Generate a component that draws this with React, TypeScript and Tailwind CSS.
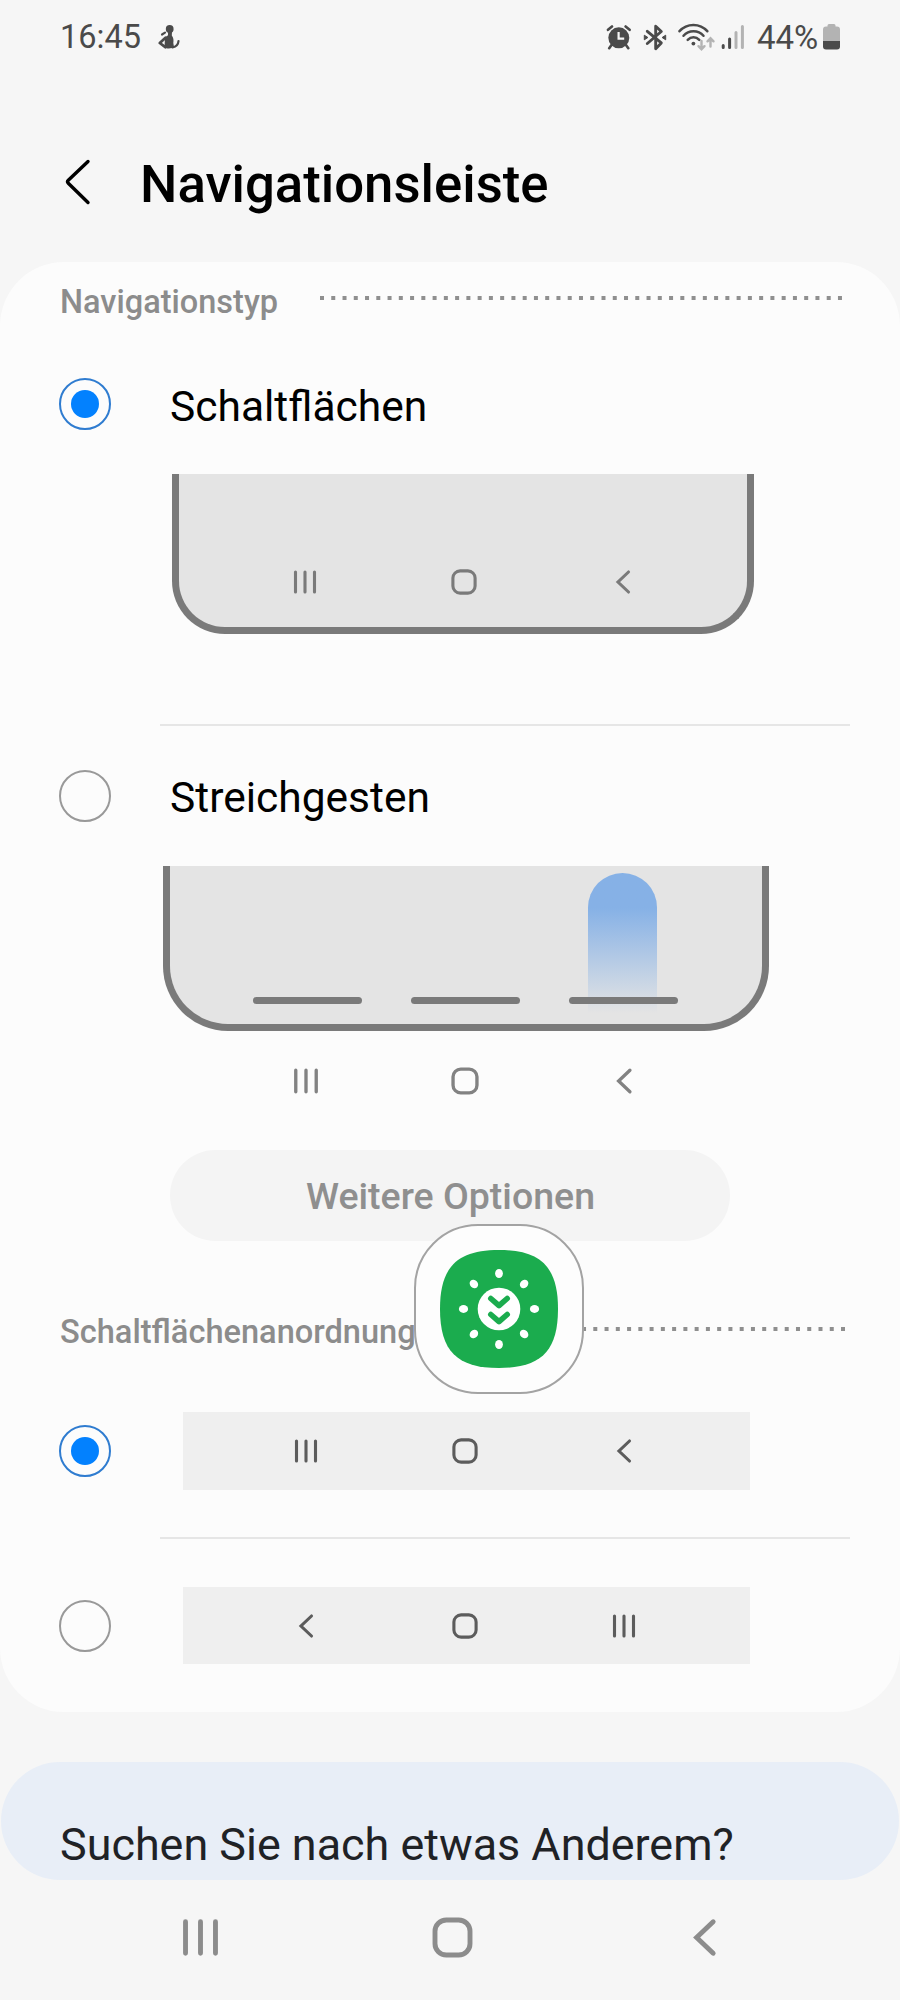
import React from "react";

type NavIconName = "recents" | "home" | "back";

// Button orders
const DEFAULT_ORDER: NavIconName[] = ["recents", "home", "back"];
const REVERSED_ORDER: NavIconName[] = ["back", "home", "recents"];

// Angles of the small dots around the floating button's centre
const RAYS = [0, 45, 90, 135, 180, 225, 270, 315];

function NavIcon({ name, size = 26 }: { name: NavIconName; size?: number }) {
  return (
    <svg
      width={size}
      height={size}
      viewBox="0 0 26 26"
      fill="none"
      stroke="currentColor"
      strokeWidth={3.1}
      strokeLinecap="round"
    >
      {name === "recents" && <path d="M3.5 3v20M13 3v20M22.5 3v20" />}
      {name === "home" && (
        <rect x="1.9" y="1.9" width="22.2" height="22.2" rx="7.2" />
      )}
      {name === "back" && <path d="M18.5 3L8 13l10.5 10" />}
    </svg>
  );
}

function NavIcons({
  order = DEFAULT_ORDER,
  size = 26,
}: {
  order?: NavIconName[];
  size?: number;
}) {
  return (
    <div className="flex">
      {order.map((name) => (
        <div key={name} className="w-[159px] flex justify-center">
          <NavIcon name={name} size={size} />
        </div>
      ))}
    </div>
  );
}

function Radio({ checked = false }: { checked?: boolean }) {
  return (
    <div
      className={
        checked
          ? "w-[52px] h-[52px] shrink-0 rounded-full border-2 border-[#2f7cd0] flex items-center justify-center"
          : "w-[52px] h-[52px] shrink-0 rounded-full border-2 border-[#999999]"
      }
    >
      {checked && <div className="w-7 h-7 rounded-full bg-[#0381fe]" />}
    </div>
  );
}

function DottedLine({ width }: { width: number }) {
  return (
    <svg width={width} height="4" className="shrink-0">
      <line
        x1="0"
        y1="2"
        x2={width}
        y2="2"
        stroke="#8f8f8f"
        strokeWidth="4"
        strokeDasharray="4 7.26"
      />
    </svg>
  );
}

function StatusBar() {
  return (
    <div className="h-[74px] pl-[60px] pr-[60px] flex items-center text-[#4a4a4a]">
      <span className="w-[83px] pt-px text-[32.5px] leading-none">16:45</span>
      <svg
        className="ml-[14px]"
        width="24"
        height="26"
        viewBox="0 0 24 26"
        fill="none"
        stroke="currentColor"
        strokeLinecap="round"
        strokeLinejoin="round"
      >
        <circle cx="12.700" cy="5" r="3.900" fill="currentColor" stroke="none" />
        <path
          d="M11 8h4l-.2 3.500c1.700 2 2 5 1.500 7.500l.7 4c-1.700 1.700-7 2-9.500.5L8 13.500l3-2.200z"
          fill="currentColor"
          stroke="none"
        />
        <path d="M5 10.500l3-1.900" strokeWidth="2.200" />
        <path d="M8.500 13.800L2.800 19l5.500 4.200" strokeWidth="2.800" />
        <path d="M15.500 23.300c3.500-.6 5.800-2.800 6-6.300" strokeWidth="2.200" />
      </svg>

      <div className="ml-auto flex items-center">
        {/* Alarm */}
        <svg width="26" height="26" viewBox="0 0 26 26" fill="none">
          <circle cx="12.8" cy="13.8" r="10.5" fill="currentColor" />
          <path
            d="M2 5.8L6 2.5M23.6 5.8L19.6 2.5M5.5 21l-2.3 3.2M20 21l2.3 3.2"
            stroke="currentColor"
            strokeWidth="2.6"
            strokeLinecap="round"
          />
          <path d="M12.6 8v6.700h5.600" stroke="#f6f6f6" strokeWidth="2.2" />
        </svg>
        {/* Bluetooth */}
        <svg
          className="ml-[11px]"
          width="25"
          height="27"
          viewBox="0 0 25 27"
          fill="none"
        >
          <path
            d="M4.300 7.300l14 11.600-5.600 5.900V2.200l5.600 5.300-14 12"
            stroke="currentColor"
            strokeWidth="2.9"
            strokeLinecap="round"
            strokeLinejoin="round"
          />
          <path
            d="M1.300 11.200l3.600 2.300-3.600 2.300zM22.700 11.200l-3.600 2.300 3.600 2.300z"
            fill="currentColor"
            stroke="currentColor"
            strokeLinejoin="round"
          />
        </svg>
        {/* Wifi */}
        <svg
          className="ml-[10px]"
          width="38"
          height="28"
          viewBox="0 0 38 28"
          fill="none"
          strokeLinecap="round"
        >
          <g stroke="currentColor" strokeWidth="2.5">
            <path d="M1.500 8.200C8.900-.2 21.900-.2 29.300 8.200" />
            <path d="M5.500 12.700c5.300-6.100 14.700-6.100 20 0" />
            <path d="M9.700 16.800c3.400-3.500 8.200-3.500 11.600 0" />
          </g>
          <circle cx="15.4" cy="20.6" r="1.9" fill="currentColor" />
          <g stroke="#b3b3b3" strokeWidth="2.4">
            <path d="M23.500 18v8M20.500 23.200l3 3 3-3M32.500 23.500v-8M29.500 18.300l3-3 3 3" />
          </g>
        </svg>
        {/* Signal */}
        <svg
          className="ml-[5px]"
          width="24"
          height="26"
          viewBox="0 0 24 26"
          fill="none"
          strokeWidth="3"
          strokeLinecap="round"
        >
          <path d="M2.200 21.500v2M8.600 15v8.500" stroke="currentColor" />
          <path d="M15 8.500v15M21.400 2.500v21" stroke="#b3b3b3" />
        </svg>
        <span className="ml-[12px] w-[64px] text-[33px] leading-none">
          44%
        </span>
        {/* Battery */}
        <svg
          className="ml-[2px]"
          width="17"
          height="26"
          viewBox="0 0 17 26"
        >
          <path
            d="M4.500 2.500V1.500Q4.500 0 6 0h5q1.500 0 1.500 1.500v1h1.500q3 0 3 3V17H0V5.500q0-3 3-3z"
            fill="#b3b3b3"
          />
          <path d="M0 17h17v5.500q0 3-3 3H3q-3 0-3-3z" fill="currentColor" />
        </svg>
      </div>
    </div>
  );
}

function FloatingButton() {
  return (
    <div className="absolute left-[414px] top-[1224px] w-[170px] h-[170px] rounded-[64px] border-2 border-[#a3a3a3] bg-[#fdfdfd] flex items-center justify-center">
      <svg width="118" height="118" viewBox="0 0 118 118" fill="none">
        <path
          d="M59 0C101 0 118 17 118 59s-17 59-59 59S0 101 0 59 17 0 59 0z"
          fill="#1bac4e"
        />
        {RAYS.map((angle) => (
          <ellipse
            key={angle}
            cx="59"
            cy="23.5"
            rx="3.9"
            ry="4.6"
            fill="#fff"
            transform={`rotate(${angle} 59 59)`}
          />
        ))}
        <circle cx="59" cy="59" r="21.3" fill="#fff" />
        <path
          d="M50.800 48.500L59 55.700l8.200-7.200M50.800 64.500L59 71.700l8.200-7.200"
          stroke="#1bac4e"
          strokeWidth="5.6"
          strokeLinecap="round"
          strokeLinejoin="round"
        />
      </svg>
    </div>
  );
}

export default function App() {
  return (
    <div className="relative w-[900px] h-[2000px] overflow-hidden bg-[#f6f6f6] font-[Roboto,sans-serif] flex flex-col">
      <StatusBar />

      {/* Header */}
      <div className="h-[188px] pt-[30px] pl-[64px] flex items-center">
        <svg
          width="27"
          height="48"
          viewBox="0 0 27 48"
          fill="none"
          stroke="#000"
          strokeWidth="3.4"
          strokeLinecap="round"
        >
          <path d="M24 2.500L4.300 21.300q-1.500 1.500 0 3L24 43.500" />
        </svg>
        <h1 className="ml-[49px] pt-[2px] text-[52.7px] leading-none font-medium text-black">
          Navigationsleiste
        </h1>
      </div>

      <div className="h-[1450px] shrink-0 rounded-[64px] bg-[#fcfcfc]">
        {/* Navigation type */}
        <div className="h-[79px] pl-[60px] pr-[57px] flex items-center justify-between">
          <h2 className="pt-px text-[32.5px] leading-none font-medium text-[#8c8c8c]">
            Navigationstyp
          </h2>
          <div className="pb-[7px]">
            <DottedLine width={523} />
          </div>
        </div>

        <div className="h-[126px] pl-[59px] flex items-center">
          <Radio checked />
          <span className="ml-[59px] pt-[6px] text-[42.5px] leading-none text-black">
            Schaltflächen
          </span>
        </div>
        <div className="mt-[7px] ml-[172px] w-[582px] h-[160px] rounded-b-[53px] border-[7px] border-t-0 border-[#7a7a7a] bg-[#e4e4e4] text-[#7a7a7a] flex items-end justify-center pb-[32px] pl-[2px]">
          <NavIcons />
        </div>

        <div className="mt-[90px] ml-[160px] w-[690px] h-[2px] bg-[#e6e6e6]" />

        <div className="h-[139px] pl-[59px] flex items-center">
          <Radio />
          <span className="ml-[59px] pt-[6px] text-[42.5px] leading-none text-black">
            Streichgesten
          </span>
        </div>
        <div className="relative mt-px ml-[163px] w-[606px] h-[165px] rounded-b-[65px] border-[7px] border-t-0 border-[#7a7a7a] bg-[#e4e4e4] flex items-end justify-center gap-[49px] pb-[20px] pr-[2px]">
          {/* Swipe trail */}
          <div className="absolute left-[418px] top-[7px] w-[69px] h-[140px] rounded-t-full bg-linear-to-b from-[#86b1e6] from-25% to-[#86b1e6]/0" />
          <div className="w-[109px] h-[7px] rounded-full bg-[#7a7a7a]" />
          <div className="w-[109px] h-[7px] rounded-full bg-[#7a7a7a]" />
          <div className="relative w-[109px] h-[7px] rounded-full bg-[#7a7a7a]" />
        </div>
        <div className="h-[99px] pl-[226px] flex items-center text-[#828282]">
          <NavIcons size={28} />
        </div>
        <button className="mt-[20px] ml-[170px] w-[560px] h-[91px] pt-[3px] pl-px rounded-full bg-[#f4f4f4] flex items-center justify-center text-[37.5px] leading-none font-medium text-[#8f8f8f]">
          Weitere Optionen
        </button>

        {/* Button order */}
        <div className="h-[171px] pt-[10px] pl-[60px] pr-[55px] flex items-center justify-between">
          <h2 className="pt-[2px] text-[32.6px] leading-none font-medium text-[#8c8c8c]">
            Schaltflächenanordnung
          </h2>
          <div className="pb-[5px]">
            <DottedLine width={308} />
          </div>
        </div>
        <div className="pl-[59px] flex items-center">
          <Radio checked />
          <div className="ml-[72px] w-[567px] h-[78px] pr-[3px] bg-[#efefef] text-[#5c5c5c] flex items-center justify-center">
            <NavIcons />
          </div>
        </div>
        <div className="mt-[47px] ml-[160px] w-[690px] h-[2px] bg-[#e6e6e6]" />
        <div className="mt-[48px] pl-[59px] flex items-center">
          <Radio />
          <div className="ml-[72px] w-[567px] h-[77px] pr-[3px] bg-[#efefef] text-[#5c5c5c] flex items-center justify-center">
            <NavIcons order={REVERSED_ORDER} />
          </div>
        </div>
      </div>

      {/* Suggestions */}
      <div className="mt-[50px] mx-px h-[118px] shrink-0 pl-[59px] pt-[46px] rounded-[59px] bg-[#e8eef7]">
        <p className="text-[44.9px] leading-[74px] text-[#1f2226]">
          Suchen Sie nach etwas Anderem?
        </p>
      </div>

      {/* System navigation bar */}
      <div className="h-[120px] shrink-0 pb-[5px] pl-[5px] flex items-center justify-center gap-[211px] text-[#8c8c8c]">
        {DEFAULT_ORDER.map((name) => (
          <NavIcon key={name} name={name} size={41} />
        ))}
      </div>

      <FloatingButton />
    </div>
  );
}
